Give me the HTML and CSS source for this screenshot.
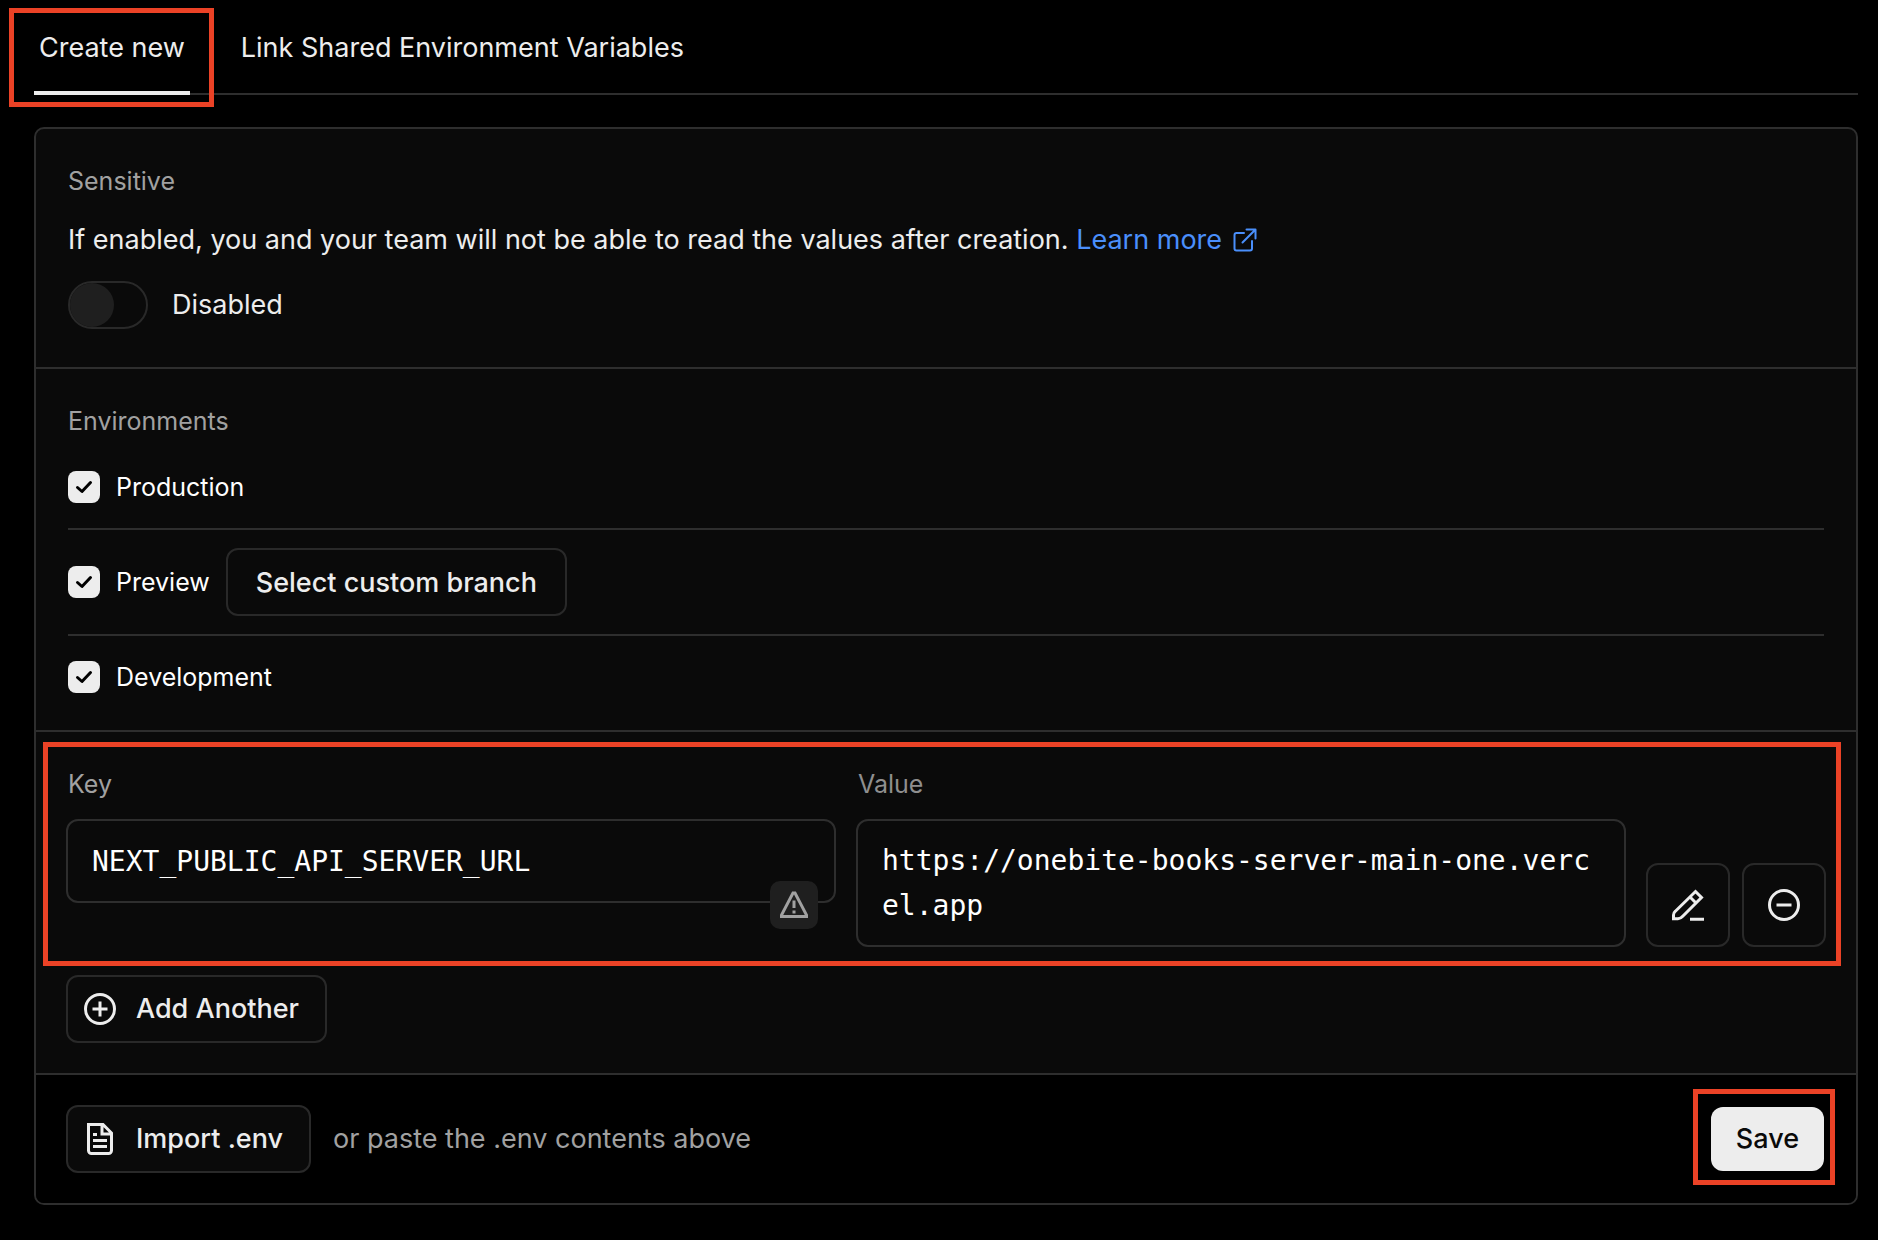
FILE: index.html
```html
<!DOCTYPE html>
<html lang="en">
<head>
<meta charset="utf-8">
<title>Environment Variables</title>
<link rel="stylesheet" href="styles.css">
</head>
<body>
<main class="page">
  <nav class="tabs" aria-label="Variable source">
    <button class="tab tab-active marked" type="button">Create new</button>
    <button class="tab" type="button">Link Shared Environment Variables</button>
  </nav>

  <form class="panel">
    <section class="section sensitive">
      <h2 class="label">Sensitive</h2>
      <p class="note">If enabled, you and your team will not be able to read the values after creation.
        <a class="link" href="#">Learn more
          <svg class="icon-link" viewBox="0 0 28 28" aria-hidden="true"><path d="M14 7H6.500A2 2 0 0 0 4.500 9V22.500A2 2 0 0 0 6.500 24.500H20A2 2 0 0 0 22 22.500V15M16.500 3.500H25.500V12.500M12.500 16.500 25 4"/></svg></a></p>
      <label class="switch"><input class="switch-input" type="checkbox">Disabled</label>
    </section>

    <section class="section environments">
      <h2 class="label">Environments</h2>
      <ul class="env-list">
        <li class="env env-first">
          <label class="env-label"><span class="check"><input class="check-box" type="checkbox" checked><svg class="check-mark" viewBox="0 0 32 32" aria-hidden="true"><path d="M9.500 16.500l4.500 4 8.500-9"/></svg></span>Production</label>
        </li>
        <li class="env">
          <label class="env-label"><span class="check"><input class="check-box" type="checkbox" checked><svg class="check-mark" viewBox="0 0 32 32" aria-hidden="true"><path d="M9.500 16.500l4.500 4 8.500-9"/></svg></span>Preview</label>
          <button class="button" type="button">Select custom branch</button>
        </li>
        <li class="env env-last">
          <label class="env-label"><span class="check"><input class="check-box" type="checkbox" checked><svg class="check-mark" viewBox="0 0 32 32" aria-hidden="true"><path d="M9.500 16.500l4.500 4 8.500-9"/></svg></span>Development</label>
        </li>
      </ul>
    </section>

    <section class="section variables">
      <div class="variable marked">
        <div class="field">
          <label class="label field-label" for="key">Key</label>
          <div class="key-box">
            <input class="input" id="key" type="text" value="NEXT_PUBLIC_API_SERVER_URL" spellcheck="false">
            <span class="warning"><svg class="icon-warning" viewBox="0 0 28 28" aria-hidden="true"><path d="M13 2h2l11.500 22v1.500h-25V24z"/><path d="M14 9.500v7.500M14 19.500v3"/></svg></span>
          </div>
        </div>
        <div class="field">
          <label class="label field-label label-dim" for="value">Value</label>
          <textarea class="input textarea" id="value" rows="2" spellcheck="false">https://onebite-books-server-main-one.vercel.app</textarea>
        </div>
        <div class="actions">
          <button class="button square" type="button" aria-label="Edit note"><svg class="icon" viewBox="0 0 16 16" aria-hidden="true"><path d="M11.750 1.250 14.750 4.250 5.500 13.500Q4.300 14.850 3 14.850H.750V13Q.750 11.900 1.700 11.100zM9 4l3 3M9 15.150h7"/></svg></button>
          <button class="button square" type="button" aria-label="Remove"><svg class="icon" viewBox="0 0 16 16" aria-hidden="true"><circle cx="8" cy="8" r="7.250"/><path d="M4.250 8h7.500"/></svg></button>
        </div>
      </div>
      <button class="button with-icon" type="button"><svg class="icon" viewBox="0 0 16 16" aria-hidden="true"><circle cx="8" cy="8" r="7.250"/><path d="M4.250 8h7.500M8 4.250v7.500"/></svg>Add Another</button>
    </section>

    <footer class="footer">
      <button class="button with-icon" type="button"><svg class="icon" viewBox="0 0 16 16" aria-hidden="true"><path d="M2.250.750H9.500L13.750 5V13.750A1.500 1.500 0 0 1 12.250 15.250H3.750A1.500 1.500 0 0 1 2.250 13.750zM9 .750V5.500H13.750M4.500 5.750H6.500M4.500 8.750h7M4.500 11.750h7"/></svg>Import .env</button>
      <p class="hint">or paste the .env contents above</p>
      <div class="save-box marked"><button class="save" type="submit">Save</button></div>
    </footer>
  </form>
</main>
</body>
</html>
```
FILE: styles.css
```css
:root {
  --sans: Inter, "Liberation Sans", sans-serif;
  --mono: "DejaVu Sans Mono", "Liberation Mono", monospace;
  --line: #2e2e2e;
  --text: #ededed;
  --surface: #0a0a0a;
  --mark: #eb4226;
}

* { box-sizing: border-box; }

body {
  margin: 0;
  background: #000;
  color: var(--text);
  font: 400 27px/36px var(--sans);
}

button, input, textarea { font: inherit; color: inherit; }
h2, p, ul { margin: 0; padding: 0; font-weight: 400; }
svg { display: block; flex: none; fill: none; stroke: currentColor; }

.page { padding: 0 20px 36px 34px; }

/* Red frames drawn round the parts the reader should use */
.marked { position: relative; }
.marked::after {
  content: "";
  position: absolute;
  border: 5px solid var(--mark);
  pointer-events: none;
}

.tabs {
  display: flex;
  gap: 46px;
  height: 95px;
  margin-bottom: 32px;
  border-bottom: 2px solid var(--line);
}
.tab {
  height: 95px;
  padding: 4px 5px 0;
  border: 0;
  border-bottom: 4px solid transparent;
  background: none;
}
.tab-active { border-bottom-color: var(--text); }
.tab-active::after { inset: 8px -24px -16px -25px; }

.panel {
  border: 2px solid var(--line);
  border-radius: 10px;
  background: var(--surface);
  overflow: hidden;
}
.section { border-bottom: 2px solid var(--line); }
.label {
  display: block;
  color: #a1a1a1;
  font-size: 25px;
  line-height: 36px;
}
.label-dim { color: #8f8f8f; }

.sensitive { padding: 34px 32px 38px; }
.note { margin-top: 23px; }
.link {
  display: inline-flex;
  align-items: center;
  gap: 8px;
  color: #4a8ffb;
  text-decoration: none;
}
.icon-link {
  width: 28px;
  height: 28px;
  stroke-width: 2;
  stroke-linecap: round;
  stroke-linejoin: round;
}
.switch {
  display: flex;
  align-items: center;
  gap: 24px;
  margin-top: 23px;
}
.switch-input {
  appearance: none;
  display: flex;
  width: 80px;
  height: 48px;
  margin: 0;
  border: 2px solid #292929;
  border-radius: 24px;
}
.switch-input::before {
  content: "";
  width: 44px;
  height: 44px;
  border-radius: 50%;
  background: #1f1f1f;
}

.environments { padding: 34px 32px 0; }
.env-list { list-style: none; margin-top: 16px; }
.env {
  display: flex;
  align-items: center;
  gap: 16px;
  height: 106px;
  border-bottom: 2px solid var(--line);
}
.env-first { height: 75px; padding-bottom: 9px; }
.env-last { height: 94px; padding-bottom: 12px; border-bottom: 0; }
.env-label {
  display: flex;
  align-items: center;
  gap: 16px;
  color: #fff;
  font-size: 25px;
}
.check { display: grid; }
.check-box, .check-mark {
  grid-area: 1 / 1;
  width: 32px;
  height: 32px;
  margin: 0;
}
.check-box { appearance: none; border-radius: 8px; background: var(--text); }
.check-mark {
  color: #000;
  stroke-width: 3;
  stroke-linecap: round;
  stroke-linejoin: round;
  pointer-events: none;
}

.button {
  height: 68px;
  padding: 1px 28px 0;
  border: 2px solid #292929;
  border-radius: 12px;
  background: var(--surface);
  font-weight: 500;
}
.with-icon {
  display: flex;
  align-items: center;
  gap: 20px;
  padding: 0 26px 0 16px;
}
.icon { width: 32px; height: 32px; stroke-width: 1.500; }
.square {
  display: grid;
  place-items: center;
  width: 84px;
  height: 84px;
  padding: 0;
}

.variables { padding: 34px 30px 30px; }
.variable {
  display: grid;
  grid-template-columns: 1fr 1fr auto;
  gap: 20px;
  margin-bottom: 28px;
}
.variable::after { inset: -24px -15px -19px -23px; }
.field-label { margin: 0 0 17px 2px; }
.key-box { position: relative; }
.input {
  display: block;
  width: 100%;
  height: 84px;
  padding: 0 24px;
  border: 2px solid var(--line);
  border-radius: 12px;
  outline: 0;
  background: var(--surface);
  color: #fff;
  font: 28px/45px var(--mono);
}
.textarea {
  height: 128px;
  padding: 17px 24px;
  overflow: hidden;
  resize: none;
  word-break: break-all;
}
.warning {
  position: absolute;
  right: 18px;
  bottom: -26px;
  display: grid;
  place-items: center;
  width: 48px;
  height: 48px;
  border-radius: 10px;
  background: #1f1f1f;
  color: #a1a1a1;
}
.icon-warning { width: 28px; height: 28px; stroke-width: 3; }
.actions { display: flex; align-items: flex-end; gap: 12px; }

.footer {
  display: flex;
  align-items: center;
  gap: 22px;
  padding: 30px 32px 30px 30px;
  background: #000;
}
.hint { flex: 1; color: #a1a1a1; }
.save-box::after { inset: -18px -11px -14px -18px; }
.save {
  display: block;
  height: 64px;
  padding: 0 25px;
  border: 0;
  border-radius: 12px;
  background: var(--text);
  color: #0a0a0a;
  font-weight: 500;
}
```
